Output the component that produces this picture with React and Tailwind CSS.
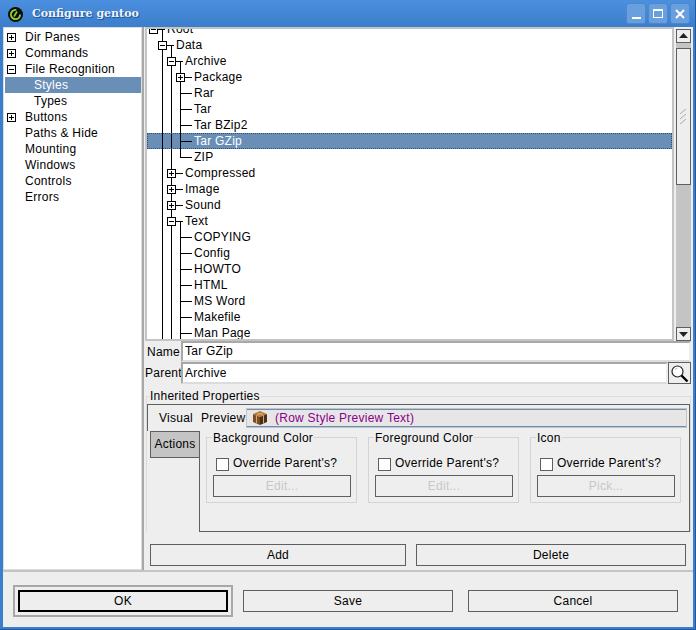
import React from "react";

const font = { fontFamily: '"Liberation Sans", Arial, sans-serif' };

const leftRows = [
  { text: "Dir Panes", box: "+" },
  { text: "Commands", box: "+" },
  { text: "File Recognition", box: "-" },
  { text: "Styles", child: true, selected: true },
  { text: "Types", child: true },
  { text: "Buttons", box: "+" },
  { text: "Paths & Hide" },
  { text: "Mounting" },
  { text: "Windows" },
  { text: "Controls" },
  { text: "Errors" },
];

// depth: place of the expander or leaf, cols: vertical lines running through the row
const styleRows = [
  { text: "Root", depth: 0, box: "-", cols: [162], half: [] },
  { text: "Data", depth: 1, box: "-", cols: [162], half: [171] },
  { text: "Archive", depth: 2, box: "-", cols: [162, 171], half: [180] },
  { text: "Package", depth: 3, box: "+", cols: [162, 171, 180] },
  { text: "Rar", depth: 3, cols: [162, 171, 180] },
  { text: "Tar", depth: 3, cols: [162, 171, 180] },
  { text: "Tar BZip2", depth: 3, cols: [162, 171, 180] },
  { text: "Tar GZip", depth: 3, cols: [162, 171, 180], selected: true },
  { text: "ZIP", depth: 3, cols: [162, 171], end: 180 },
  { text: "Compressed", depth: 2, box: "+", cols: [162, 171] },
  { text: "Image", depth: 2, box: "+", cols: [162, 171] },
  { text: "Sound", depth: 2, box: "+", cols: [162, 171] },
  { text: "Text", depth: 2, box: "-", cols: [162, 171], half: [180] },
  { text: "COPYING", depth: 3, cols: [162, 171, 180] },
  { text: "Config", depth: 3, cols: [162, 171, 180] },
  { text: "HOWTO", depth: 3, cols: [162, 171, 180] },
  { text: "HTML", depth: 3, cols: [162, 171, 180] },
  { text: "MS Word", depth: 3, cols: [162, 171, 180] },
  { text: "Makefile", depth: 3, cols: [162, 171, 180] },
  { text: "Man Page", depth: 3, cols: [162, 171, 180] },
];

const Expander = ({ type, cx, cy }) => (
  <g>
    <rect x={cx - 3.5} y={cy - 3.5} width="8" height="8" fill="#fff" stroke="#000" />
    <line x1={cx - 2} y1={cy + 0.5} x2={cx + 3} y2={cy + 0.5} stroke="#000" />
    {type === "+" && <line x1={cx + 0.5} y1={cy - 2} x2={cx + 0.5} y2={cy + 3} stroke="#000" />}
  </g>
);

const TreeLines = ({ row }) => {
  const nodeX = 153 + row.depth * 9;
  const off = 147; // left edge of the row in window coordinates
  return (
    <svg height="16" className="shrink-0" style={{ width: 20 + row.depth * 9 }}>
      {row.cols.map((x) => (
        <line key={x} x1={x - off + 0.5} y1="0" x2={x - off + 0.5} y2="16" stroke="#000" />
      ))}
      {(row.half || []).map((x) => (
        <line key={x} x1={x - off + 0.5} y1="8" x2={x - off + 0.5} y2="16" stroke="#000" />
      ))}
      {row.end && <line x1={row.end - off + 0.5} y1="0" x2={row.end - off + 0.5} y2="8.5" stroke="#000" />}
      <line x1={nodeX - off} y1="8.5" x2={nodeX - off + 12} y2="8.5" stroke="#000" />
      {row.box && <Expander type={row.box} cx={nodeX - off} cy={8} />}
    </svg>
  );
};

const GtkButton = ({ label, disabled, className = "" }) => (
  <div
    className={`flex items-center justify-center h-[22px] border border-[#5f5f5f] bg-[#eeeeee] ${
      disabled ? "text-[#c8c8c8]" : "text-black"
    } ${className}`}
  >
    {label}
  </div>
);

const OverrideFrame = ({ title, action }) => (
  <div className="relative w-[151px] h-[66px] border border-[#d4d4d4] pl-[6px] pr-[5px] pt-[16px]">
    <span className="absolute left-[5px] -top-[8px] bg-[#eeeeee] px-[1px] leading-[16px]">{title}</span>
    <div className="flex items-center gap-[4px] pl-[3px] h-[20px]">
      <div className="w-[13px] h-[13px] border border-[#5f5f5f] bg-white" />
      <span className="pb-[2px]">Override Parent's?</span>
    </div>
    <GtkButton label={action} disabled className="mt-[1px]" />
  </div>
);

const Crate = () => (
  <svg width="16" height="16" viewBox="0 0 16 16" className="shrink-0">
    <path d="M1 4 L8 1 L15 4 L8 7 Z" fill="#b67a3c" />
    <path d="M1 4 L8 7 V15 L1 12 Z" fill="#7a4d26" />
    <path d="M15 4 L8 7 V15 L15 12 Z" fill="#4a2f18" />
    <path d="M4.5 2.5 L11.5 5.5 V13.5 M11.5 2.5 L4.5 5.5 V13.5" fill="none" stroke="#d8a868" strokeWidth="1" />
  </svg>
);

export default function App() {
  return (
    <div
      style={font}
      className="w-[696px] h-[630px] flex flex-col bg-[#3b7ecb] border-r border-b border-[#1f5a9e] text-black overflow-hidden"
    >
      {/* Title bar */}
      <div className="h-[27px] shrink-0 flex items-center bg-gradient-to-b from-[#4b8fdf] to-[#3b7ecb] pl-[8px] pr-[5px]">
        <svg width="15" height="15" viewBox="0 0 15 15" className="shrink-0 mt-[1px]">
          <circle cx="7.5" cy="7.5" r="7.5" fill="#0c0c0c" />
          <circle cx="7.5" cy="7.5" r="4.6" fill="none" stroke="#8fd62b" strokeWidth="1.8" strokeDasharray="22 7" />
          <path d="M6 9.5 L9 4.5" stroke="#8fd62b" strokeWidth="1.6" />
        </svg>
        <span
          style={{ fontFamily: '"DejaVu Serif", serif' }}
          className="ml-[9px] mt-[2px] text-[11px] font-bold text-[#eef4fb] [text-shadow:1px_1px_1px_#1d4f8f]"
        >
          Configure gentoo
        </span>
        <div className="ml-auto flex gap-[2px]">
          <div className="w-[20px] h-[21px] rounded-[3px] bg-[#6a9fdd] border border-[#4d87cf] flex items-end justify-center pb-[4px]">
            <div className="w-[9px] h-[2px] bg-white" />
          </div>
          <div className="w-[20px] h-[21px] rounded-[3px] bg-[#6a9fdd] border border-[#4d87cf] flex items-center justify-center">
            <div className="w-[10px] h-[9px] border border-white border-t-2" />
          </div>
          <div className="w-[20px] h-[21px] rounded-[3px] bg-[#6a9fdd] border border-[#4d87cf] flex items-center justify-center">
            <svg width="10" height="10" viewBox="0 0 10 10">
              <path d="M1 1 L9 9 M9 1 L1 9" stroke="#fff" strokeWidth="2" />
            </svg>
          </div>
        </div>
      </div>

      {/* Client area */}
      <div className="flex-1 ml-[3px] mr-[2px] mb-[2px] bg-[#eeeeee] flex flex-col min-h-0 text-[12px] tracking-[0.25px]">
        <div className="h-[545px] shrink-0 flex border-b-2 border-[#c4c4c4]">
          {/* Sections tree */}
          <div className="w-[139px] shrink-0 bg-white border border-[#dcdcdc] pt-[1px] pl-[1px]">
            {leftRows.map((row) => (
              <div
                key={row.text}
                className={`h-[16px] flex items-center ${row.selected ? "bg-[#6a8fb6] text-white" : ""}`}
              >
                <div className="w-[20px] shrink-0 flex justify-end pr-[9px]">
                  {row.box && (
                    <svg width="9" height="9">
                      <rect x="0.5" y="0.5" width="8" height="8" fill="#fff" stroke="#000" />
                      <line x1="2" y1="4.5" x2="7" y2="4.5" stroke="#000" />
                      {row.box === "+" && <line x1="4.5" y1="2" x2="4.5" y2="7" stroke="#000" />}
                    </svg>
                  )}
                </div>
                <span className={row.child ? "ml-[9px]" : ""}>{row.text}</span>
              </div>
            ))}
          </div>
          <div className="w-[3px] shrink-0 border-l-2 border-[#a8a8a8]" />

          {/* Style editor */}
          <div className="flex-1 min-w-0 flex flex-col">
            <div className="h-[314px] shrink-0 flex">
              <div className="w-[529px] shrink-0 bg-white border-2 border-[#c4c4c4] overflow-hidden">
                <div className="-mt-[8px]">
                  {styleRows.map((row) => (
                    <div
                      key={row.text}
                      className={`h-[16px] flex items-center ${
                        row.selected
                          ? "bg-[#6a8fb6] text-white outline-1 outline-dotted outline-offset-[-1px] outline-[#2f4f75]"
                          : ""
                      }`}
                    >
                      <TreeLines row={row} />
                      <span>{row.text}</span>
                    </div>
                  ))}
                </div>
              </div>
              <div className="ml-[2px] w-[15px] shrink-0 flex flex-col bg-[#c4c4c4] mt-[2px]">
                <div className="h-[14px] shrink-0 border border-[#5f5f5f] bg-[#eeeeee] flex items-center justify-center">
                  <svg width="9" height="6"><path d="M4.5 0 L9 5 H0 Z" fill="#222" /></svg>
                </div>
                <div className="mt-[5px] h-[137px] shrink-0 border border-[#5f5f5f] bg-[#eeeeee] flex items-center justify-center">
                  <svg width="7" height="16">
                    <path d="M0 5 L6 0 M0 10 L6 5 M0 15 L6 10" stroke="#aaa" />
                  </svg>
                </div>
                <div className="mt-auto h-[14px] shrink-0 border border-[#5f5f5f] bg-[#eeeeee] flex items-center justify-center">
                  <svg width="9" height="6"><path d="M4.5 6 L9 1 H0 Z" fill="#222" /></svg>
                </div>
              </div>
            </div>

            <div className="flex items-center h-[21px]">
              <span className="w-[36px] pl-[2px] shrink-0">Name</span>
              <div className="flex-1 h-[21px] mr-[2px] bg-white border-2 border-[#a8a8a8] border-r-[#eeeeee] border-b-[#dcdcdc] flex items-center pl-[2px] pb-[2px]">
                Tar GZip
              </div>
            </div>
            <div className="flex items-center h-[22px]">
              <span className="w-[36px] shrink-0">Parent</span>
              <div className="flex-1 h-[22px] bg-white border-2 border-[#a8a8a8] border-r-[#eeeeee] border-b-[#dcdcdc] flex items-center pl-[2px]">
                Archive
              </div>
              <div className="w-[23px] h-[22px] mr-[2px] shrink-0 border border-[#5f5f5f] bg-[#eeeeee] flex items-center justify-center">
                <svg width="19" height="19" viewBox="0 0 19 19">
                  <circle cx="7.5" cy="7.5" r="5.5" fill="#fff" stroke="#222" strokeWidth="1.2" />
                  <path d="M5 5.5 Q6 4.3 7.5 4.2" fill="none" stroke="#bbb" />
                  <path d="M11.5 11.5 L17.5 17.5" stroke="#000" strokeWidth="2.4" />
                </svg>
              </div>
            </div>

            {/* Inherited properties */}
            <div className="relative h-[136px] mt-[12px] ml-[1px] mr-[2px] border border-[#dcdcdc] border-b-0 flex">
              <span className="absolute left-[2px] -top-[9px] bg-[#eeeeee] px-[1px] leading-[16px]">
                Inherited Properties
              </span>
              <div className="w-[52px] shrink-0 pt-[7px] flex flex-col items-end">
                <div className="relative z-10 w-[53px] -mr-[1px] shrink-0 h-[27px] border border-[#5f5f5f] border-r-0 border-b-0 bg-[#eeeeee] flex items-center justify-center pl-[4px]">
                  Visual
                </div>
                <div className="w-[49px] h-[27px] shrink-0 bg-[#c4c4c4] border border-[#5f5f5f] border-r-0 flex items-center justify-center pb-[1px]">
                  Actions
                </div>
              </div>
              <div className="flex-1 min-w-0 mt-[7px] border border-[#5f5f5f] h-[128px] pt-[3px]">
                <div className="flex items-center h-[20px] pl-[1px] relative z-20">
                  <span className="w-[45px] shrink-0">Preview</span>
                  <div className="flex-1 mr-[2px] h-[20px] border border-[#c4c4c4]">
                    <div className="h-full bg-[#e6e6e6] border border-[#6a8fb6] border-r-0 border-l-0 flex items-center gap-[7px] pl-[5px]">
                      <Crate />
                      <span className="text-[#8b008b]">(Row Style Preview Text)</span>
                    </div>
                  </div>
                </div>
                <div className="flex gap-[11px] pl-[6px] mt-[9px]">
                  <OverrideFrame title="Background Color" action="Edit..." />
                  <OverrideFrame title="Foreground Color" action="Edit..." />
                  <OverrideFrame title="Icon" action="Pick..." />
                </div>
              </div>
            </div>

            <div className="flex gap-[10px] pl-[5px] pr-[7px] mt-[12px]">
              <GtkButton label="Add" className="w-[256px]" />
              <GtkButton label="Delete" className="flex-1" />
            </div>
          </div>
        </div>

        {/* Dialog buttons */}
        <div className="flex items-center pl-[10px] pt-[13px]">
          <div className="w-[220px] h-[32px] border-2 border-[#a8a8a8] p-[3px]">
            <div className="w-full h-full border-2 border-black flex items-center justify-center">OK</div>
          </div>
          <GtkButton label="Save" className="w-[210px] ml-[10px]" />
          <GtkButton label="Cancel" className="w-[210px] ml-[15px]" />
        </div>
      </div>
    </div>
  );
}
